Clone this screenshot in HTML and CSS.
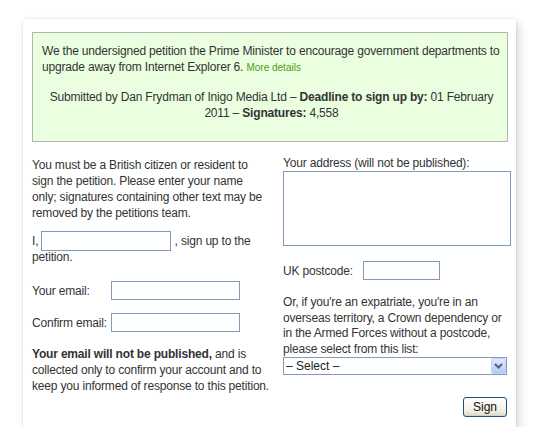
FILE: index.html
```html
<!DOCTYPE html>
<html lang="en">
<head>
  <meta charset="UTF-8">
  <title>Sign the petition</title>
  <link rel="stylesheet" href="styles.css">
</head>
<body>

<div class="petition-card">
  <div class="petition-summary">
    <p class="petition-text">We the undersigned petition the Prime Minister to encourage government departments to upgrade away from Internet Explorer 6. <a href="#" class="more-link">More details</a></p>
    <p class="petition-meta">Submitted by Dan Frydman of Inigo Media Ltd &ndash; <strong>Deadline to sign up by:</strong> 01 February 2011 &ndash; <strong>Signatures:</strong> 4,558</p>
  </div>

  <form class="sign-form">
    <div class="col-left">
      <p class="intro">You must be a British citizen or resident to sign the petition. Please enter your name only; signatures containing other text may be removed by the petitions team.</p>
      <p class="name-line">I, <input type="text" class="name-input"> , sign up to the petition.</p>
      <div class="field-row">
        <label for="email">Your email:</label>
        <input id="email" type="text" class="email-input">
      </div>
      <div class="field-row confirm-row">
        <label for="email2">Confirm email:</label>
        <input id="email2" type="text" class="email-input">
      </div>
      <p class="privacy"><strong>Your email will not be published,</strong> and is collected only to confirm your account and to keep you informed of response to this petition.</p>
    </div>

    <div class="col-right">
      <label for="address" class="address-label">Your address (will not be published):</label>
      <textarea id="address" class="address-input"></textarea>
      <div class="field-row postcode-row">
        <label for="postcode" class="postcode-label">UK postcode:</label>
        <input id="postcode" type="text" class="postcode-input">
      </div>
      <p class="expat-text">Or, if you're an expatriate, you're in an overseas territory, a Crown dependency or in the Armed Forces without a postcode, please select from this list:</p>
      <div class="select-wrap">
        <select class="overseas-select">
          <option>&ndash; Select &ndash;</option>
        </select>
        <span class="select-arrow">
          <svg width="9" height="6" viewBox="0 0 9 6"><path d="M1 1 L4.5 4.5 L8 1" fill="none" stroke="#4d6185" stroke-width="2"/></svg>
        </span>
      </div>
      <div class="submit-row">
        <button type="button" class="sign-btn">Sign</button>
      </div>
    </div>
  </form>
</div>

</body>
</html>
```

FILE: styles.css
```css
body {
  margin: 0;
  padding: 19px 0 0 23px;
  background: #fff;
  font-family: "Liberation Sans", Arial, sans-serif;
  font-size: 12px;
  line-height: 16px;
  letter-spacing: -0.18px;
  color: #333;
}

p {
  margin: 0;
}

.petition-card {
  width: 493px;
  height: 408px;
  box-sizing: border-box;
  padding: 13px 8px 0 9px;
  background: #fff;
  box-shadow: 3px 4px 9px rgba(0, 0, 0, 0.16), 0 0 2px rgba(0, 0, 0, 0.12);
}

.petition-summary {
  background-color: #eaffdf;
  border: 1px solid #b4b4b4;
  padding: 10px 6px 20px 9px;
}

.more-link {
  font-size: 10px;
  letter-spacing: 0;
  color: #4e9a1c;
  text-decoration: none;
}

.petition-meta {
  margin-top: 13px;
  text-align: center;
}

.sign-form {
  display: grid;
  grid-template-columns: 251px 228px;
  margin-top: 15px;
}

.intro {
  width: 236px;
}

.name-line {
  margin-top: 12px;
}

input, textarea, select {
  box-sizing: border-box;
  border: 1px solid #7f9db9;
  background: #fff;
  font-family: inherit;
  font-size: 12px;
  padding: 1px 3px;
  margin: 0;
}

.name-input {
  width: 130px;
  height: 20px;
  vertical-align: middle;
  margin: -4px 0 -2px;
}

.field-row {
  display: flex;
  align-items: center;
  margin-top: 16px;
}

.field-row label {
  width: 79px;
  flex-shrink: 0;
  white-space: nowrap;
}

.email-input {
  width: 129px;
  height: 19px;
}

.confirm-row {
  margin-top: 13px;
}

.privacy {
  margin-top: 14px;
}

.col-right {
  margin-top: -2px;
}

.address-label {
  display: block;
}

.address-input {
  display: block;
  width: 228px;
  height: 75px;
  resize: none;
}

.postcode-row {
  margin-top: 15px;
}

.postcode-row .postcode-label {
  width: 80px;
}

.postcode-input {
  width: 77px;
  height: 19px;
}

.expat-text {
  margin-top: 15px;
  line-height: 15.5px;
}

.select-wrap {
  position: relative;
  width: 224px;
}

.overseas-select {
  display: block;
  width: 224px;
  height: 18px;
  padding: 0 0 0 2px;
  appearance: none;
  -webkit-appearance: none;
  color: #222;
  border-radius: 0;
}

.select-arrow {
  position: absolute;
  top: 1px;
  right: 1px;
  width: 15px;
  height: 16px;
  box-sizing: border-box;
  border: 1px solid #c3d3fd;
  border-radius: 2px;
  background: linear-gradient(#dfe8ff, #b7c9f6);
  display: flex;
  align-items: center;
  justify-content: center;
  pointer-events: none;
}

.submit-row {
  display: flex;
  justify-content: flex-end;
  margin-top: 22px;
  padding-right: 4px;
}

.sign-btn {
  width: 44px;
  height: 20px;
  padding: 0;
  font-family: inherit;
  font-size: 12px;
  color: #111;
  border: 1px solid #1f4f86;
  border-radius: 3px;
  background: linear-gradient(#ffffff, #f0efe6 70%, #dcd9ca);
  box-shadow: inset 0 -1px 0 #d6d0c0;
  cursor: pointer;
}
```
